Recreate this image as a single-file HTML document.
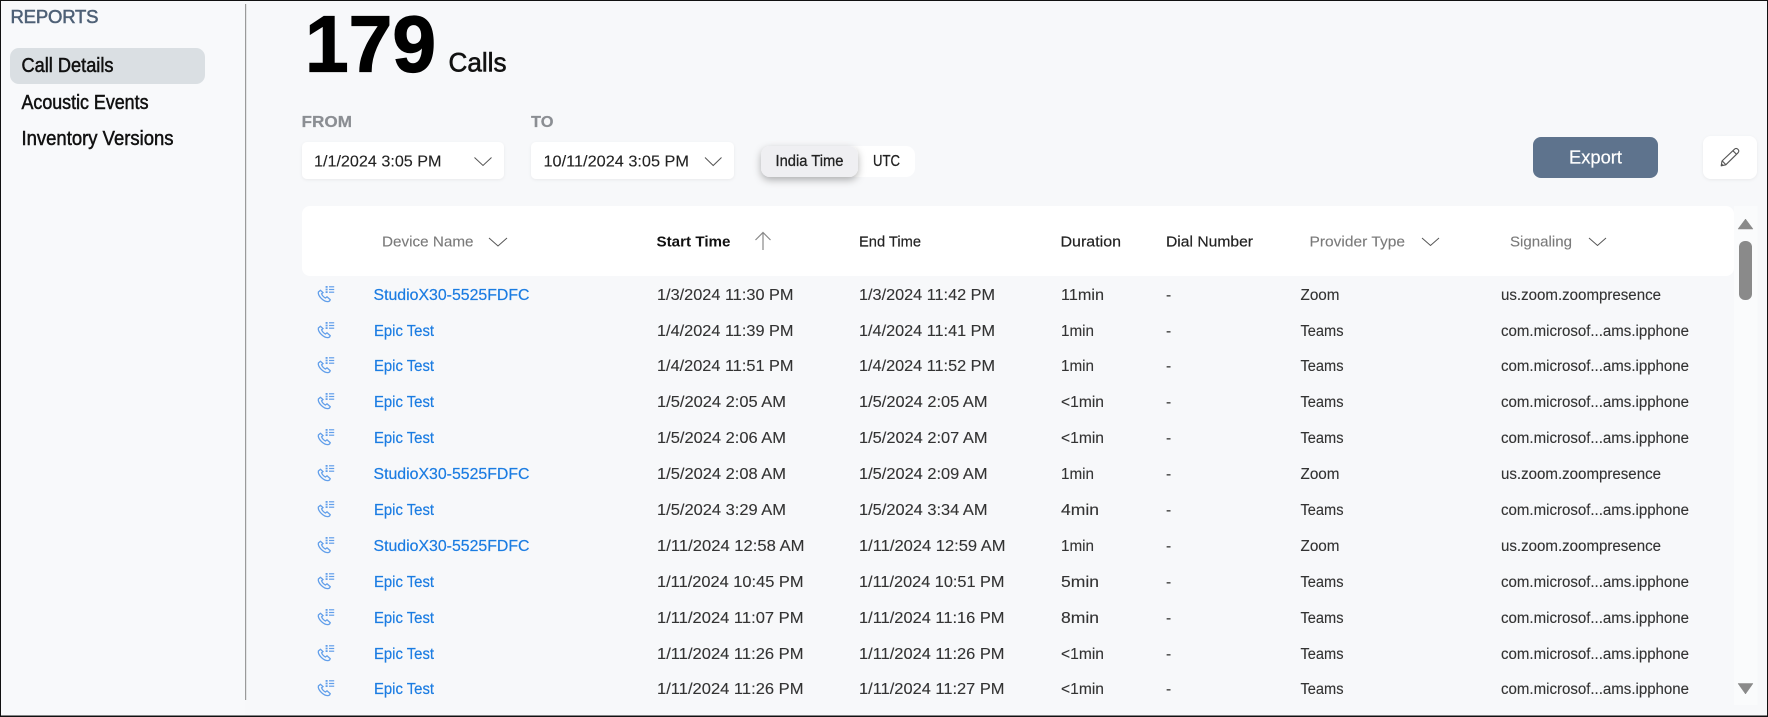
<!DOCTYPE html>
<html>
<head>
<meta charset="utf-8">
<style>
html,body{margin:0;padding:0;width:1768px;height:717px;overflow:hidden;background:#f7f8fa}
svg{display:block}
text{font-family:"Liberation Sans",sans-serif;font-size:15.5px;fill:#333;stroke:#333;stroke-width:.12px;white-space:pre}
.n{fill:#1b7ce2;stroke:#1b7ce2;stroke-width:.2px}
.h{fill:#222;stroke:#222;font-size:15px;stroke-width:.2px}
.g{fill:#7a7a7a;stroke:#7a7a7a;font-size:15px}
.m{font-size:20px;fill:#111;stroke:#111;stroke-width:.5px}
.l{font-size:16px;font-weight:bold;fill:#8b8e93;stroke:#8b8e93;stroke-width:.2px}
.c{fill:none;stroke:#555;stroke-width:1}
.i{fill:none;stroke:#629fea;stroke-width:1.3}
.b{fill:#629fea}
</style>
</head>
<body>
<svg width="1768" height="717" viewBox="0 0 1768 717" xmlns="http://www.w3.org/2000/svg">
<defs>
<filter id="s1" x="-10%" y="-20%" width="120%" height="150%"><feDropShadow dx="0" dy="1" stdDeviation="1.5" flood-color="#000" flood-opacity=".06"/></filter>
<filter id="s2" x="-30%" y="-40%" width="160%" height="220%"><feDropShadow dx="0" dy="3" stdDeviation="4" flood-color="#000" flood-opacity=".3"/></filter>
<g id="ic">
<path class="i" d="M3.5 4.3 L1.4 6 C0.6 9.5 6 15.6 10.6 15.6 C12 15.6 13 14.6 13.2 13.6 L10 10.8 L8.4 12 C6.6 11 5.2 9.4 4.6 7.8 L6 6.6 Z"/>
<rect class="b" x="8.6" y="0" width="2" height="1.8"/><rect class="b" x="8.6" y="2.6" width="2" height="1.8"/><rect class="b" x="8.6" y="5.2" width="2" height="1.8"/>
<rect class="b" x="12" y="0.2" width="5.2" height="1.2"/><rect class="b" x="12" y="2.9" width="5.2" height="1.2"/><rect class="b" x="12" y="5.6" width="5.2" height="1.2"/>
</g>
</defs>
<rect width="1768" height="717" fill="#f7f8fa"/>
<rect x="1" y="1" width="244" height="715" fill="#f8f9fb"/>

<!-- sidebar -->
<text x="10.5" y="23" style="font-size:18.5px;fill:#4e6076;stroke:#4e6076;stroke-width:.55px" textLength="88" lengthAdjust="spacing">REPORTS</text>
<rect x="10" y="48" width="195" height="36" rx="9" fill="#dadfe3"/>
<text class="m" x="21.5" y="72" textLength="92" lengthAdjust="spacingAndGlyphs">Call Details</text>
<text class="m" x="21.5" y="109" textLength="127" lengthAdjust="spacingAndGlyphs">Acoustic Events</text>
<text class="m" x="21.5" y="145" textLength="152" lengthAdjust="spacingAndGlyphs">Inventory Versions</text>
<rect x="245" y="4" width="1.2" height="696" fill="#9a9a9a"/>

<!-- title -->
<text x="305" y="71.5" style="font-size:80px;font-weight:bold;fill:#000;stroke:#000;stroke-width:1.2px" textLength="131" lengthAdjust="spacingAndGlyphs">179</text>
<text x="448.5" y="71.5" style="font-size:27px;fill:#111;stroke:#111;stroke-width:.6px" textLength="58" lengthAdjust="spacingAndGlyphs">Calls</text>

<!-- filters -->
<text class="l" x="301.5" y="127" textLength="50.5" lengthAdjust="spacingAndGlyphs">FROM</text>
<text class="l" x="531" y="127" textLength="22.5" lengthAdjust="spacingAndGlyphs">TO</text>
<rect x="302" y="142" width="202" height="37" rx="5" fill="#fff" filter="url(#s1)"/>
<text x="314" y="166.5" style="fill:#222;stroke:#222" textLength="127.5" lengthAdjust="spacingAndGlyphs">1/1/2024 3:05 PM</text>
<path class="c" d="M474.5 157.5 L483 165.5 L491.5 157.5"/>
<rect x="531" y="142" width="203" height="37" rx="5" fill="#fff" filter="url(#s1)"/>
<text x="543.5" y="166.5" style="fill:#222;stroke:#222" textLength="145.5" lengthAdjust="spacingAndGlyphs">10/11/2024 3:05 PM</text>
<path class="c" d="M705 157.5 L713.2 165.5 L721.5 157.5"/>

<!-- toggle -->
<rect x="800" y="146" width="115" height="31" rx="9" fill="#fff"/>
<rect x="761" y="146" width="97" height="31" rx="9" fill="#efeff2" filter="url(#s2)"/>
<text x="775.5" y="166" style="font-size:15.5px;fill:#222;stroke:#222;stroke-width:.3px" textLength="68" lengthAdjust="spacingAndGlyphs">India Time</text>
<text x="873" y="166" style="font-size:16px;fill:#222;stroke:#222;stroke-width:.3px" textLength="27" lengthAdjust="spacingAndGlyphs">UTC</text>

<!-- actions -->
<rect x="1533" y="137" width="125" height="41" rx="8" fill="#5e738d"/>
<text x="1569" y="163.5" style="font-size:18px;fill:#fff;stroke:#fff;stroke-width:.2px" textLength="53" lengthAdjust="spacingAndGlyphs">Export</text>
<rect x="1703" y="136" width="54" height="43" rx="8" fill="#fff" filter="url(#s1)"/>
<g fill="none" stroke="#555" stroke-width="1.1" stroke-linejoin="round">
<path d="M1722 161 L1734.5 149.2 C1735.6 148.2 1737 148.4 1738 149.4 C1739 150.5 1739 151.8 1738 152.8 L1725.8 164.8 L1721.2 165.8 Z"/>
<path d="M1733 150.8 L1736.6 154.4"/>
<path d="M1722.3 161 L1725.8 164.6"/>
</g>
<path d="M1721 166 L1721.6 163.2 L1723.8 165.4 Z" fill="#555"/>

<!-- scrollbar -->
<rect x="1734" y="206" width="23.5" height="499" fill="#fafbfc"/>
<path d="M1745.5 219 L1753 229 L1738 229 Z" fill="#8a8a8a" stroke="#8a8a8a" stroke-width=".5" stroke-linejoin="round"/>
<rect x="1739" y="241" width="13" height="59" rx="6" fill="#8a8a8a"/>
<path d="M1738 683.5 L1753 683.5 L1745.5 694 Z" fill="#8a8a8a" stroke="#8a8a8a" stroke-width=".5" stroke-linejoin="round"/>

<!-- table header -->
<rect x="302" y="206" width="1432" height="70" rx="8" fill="#fff"/>
<text class="g" x="382" y="246.5" textLength="91.5" lengthAdjust="spacingAndGlyphs">Device Name</text>
<path class="c" d="M489 238 L498 246 L507 238"/>
<text class="h" x="656.5" y="246.5" style="font-weight:bold;fill:#111;stroke:none" textLength="74" lengthAdjust="spacingAndGlyphs">Start Time</text>
<path d="M763 250 L763 232.5 M755.5 240 L763 232.5 L770.5 240" fill="none" stroke="#888" stroke-width="1.2"/>
<text class="h" x="859" y="246.5" textLength="62" lengthAdjust="spacingAndGlyphs">End Time</text>
<text class="h" x="1060.5" y="246.5" textLength="60.5" lengthAdjust="spacingAndGlyphs">Duration</text>
<text class="h" x="1166" y="246.5" textLength="87" lengthAdjust="spacingAndGlyphs">Dial Number</text>
<text class="g" x="1309.5" y="246.5" textLength="95.5" lengthAdjust="spacingAndGlyphs">Provider Type</text>
<path class="c" d="M1422 238 L1430.5 245.5 L1439 238"/>
<text class="g" x="1510" y="246.5" textLength="62" lengthAdjust="spacingAndGlyphs">Signaling</text>
<path class="c" d="M1589 238 L1597.5 245.5 L1606 238"/>

<!-- row 1 -->
<use href="#ic" x="317" y="286"/>
<text class="n" x="373.5" y="300" textLength="156" lengthAdjust="spacingAndGlyphs">StudioX30-5525FDFC</text>
<text x="657" y="300" textLength="136.5" lengthAdjust="spacingAndGlyphs">1/3/2024 11:30 PM</text>
<text x="859" y="300" textLength="136" lengthAdjust="spacingAndGlyphs">1/3/2024 11:42 PM</text>
<text x="1061" y="300" textLength="43" lengthAdjust="spacingAndGlyphs">11min</text>
<text x="1166" y="300">-</text>
<text x="1300.5" y="300" textLength="39" lengthAdjust="spacingAndGlyphs">Zoom</text>
<text x="1501" y="300" textLength="160" lengthAdjust="spacingAndGlyphs">us.zoom.zoompresence</text>
<!-- row 2 -->
<use href="#ic" x="317" y="322"/>
<text class="n" x="374" y="336" textLength="60" lengthAdjust="spacingAndGlyphs">Epic Test</text>
<text x="657" y="336" textLength="136.5" lengthAdjust="spacingAndGlyphs">1/4/2024 11:39 PM</text>
<text x="859" y="336" textLength="136" lengthAdjust="spacingAndGlyphs">1/4/2024 11:41 PM</text>
<text x="1061" y="336" textLength="33" lengthAdjust="spacingAndGlyphs">1min</text>
<text x="1166" y="336">-</text>
<text x="1300.5" y="336" textLength="43" lengthAdjust="spacingAndGlyphs">Teams</text>
<text x="1501" y="336" textLength="188" lengthAdjust="spacingAndGlyphs">com.microsof...ams.ipphone</text>
<!-- row 3 -->
<use href="#ic" x="317" y="357"/>
<text class="n" x="374" y="371" textLength="60" lengthAdjust="spacingAndGlyphs">Epic Test</text>
<text x="657" y="371" textLength="136.5" lengthAdjust="spacingAndGlyphs">1/4/2024 11:51 PM</text>
<text x="859" y="371" textLength="136" lengthAdjust="spacingAndGlyphs">1/4/2024 11:52 PM</text>
<text x="1061" y="371" textLength="33" lengthAdjust="spacingAndGlyphs">1min</text>
<text x="1166" y="371">-</text>
<text x="1300.5" y="371" textLength="43" lengthAdjust="spacingAndGlyphs">Teams</text>
<text x="1501" y="371" textLength="188" lengthAdjust="spacingAndGlyphs">com.microsof...ams.ipphone</text>
<!-- row 4 -->
<use href="#ic" x="317" y="393"/>
<text class="n" x="374" y="407" textLength="60" lengthAdjust="spacingAndGlyphs">Epic Test</text>
<text x="657" y="407" textLength="129" lengthAdjust="spacingAndGlyphs">1/5/2024 2:05 AM</text>
<text x="859" y="407" textLength="128.5" lengthAdjust="spacingAndGlyphs">1/5/2024 2:05 AM</text>
<text x="1061" y="407" textLength="43" lengthAdjust="spacingAndGlyphs">&lt;1min</text>
<text x="1166" y="407">-</text>
<text x="1300.5" y="407" textLength="43" lengthAdjust="spacingAndGlyphs">Teams</text>
<text x="1501" y="407" textLength="188" lengthAdjust="spacingAndGlyphs">com.microsof...ams.ipphone</text>
<!-- row 5 -->
<use href="#ic" x="317" y="429"/>
<text class="n" x="374" y="443" textLength="60" lengthAdjust="spacingAndGlyphs">Epic Test</text>
<text x="657" y="443" textLength="129" lengthAdjust="spacingAndGlyphs">1/5/2024 2:06 AM</text>
<text x="859" y="443" textLength="128.5" lengthAdjust="spacingAndGlyphs">1/5/2024 2:07 AM</text>
<text x="1061" y="443" textLength="43" lengthAdjust="spacingAndGlyphs">&lt;1min</text>
<text x="1166" y="443">-</text>
<text x="1300.5" y="443" textLength="43" lengthAdjust="spacingAndGlyphs">Teams</text>
<text x="1501" y="443" textLength="188" lengthAdjust="spacingAndGlyphs">com.microsof...ams.ipphone</text>
<!-- row 6 -->
<use href="#ic" x="317" y="465"/>
<text class="n" x="373.5" y="479" textLength="156" lengthAdjust="spacingAndGlyphs">StudioX30-5525FDFC</text>
<text x="657" y="479" textLength="129" lengthAdjust="spacingAndGlyphs">1/5/2024 2:08 AM</text>
<text x="859" y="479" textLength="128.5" lengthAdjust="spacingAndGlyphs">1/5/2024 2:09 AM</text>
<text x="1061" y="479" textLength="33" lengthAdjust="spacingAndGlyphs">1min</text>
<text x="1166" y="479">-</text>
<text x="1300.5" y="479" textLength="39" lengthAdjust="spacingAndGlyphs">Zoom</text>
<text x="1501" y="479" textLength="160" lengthAdjust="spacingAndGlyphs">us.zoom.zoompresence</text>
<!-- row 7 -->
<use href="#ic" x="317" y="501"/>
<text class="n" x="374" y="515" textLength="60" lengthAdjust="spacingAndGlyphs">Epic Test</text>
<text x="657" y="515" textLength="129" lengthAdjust="spacingAndGlyphs">1/5/2024 3:29 AM</text>
<text x="859" y="515" textLength="128.5" lengthAdjust="spacingAndGlyphs">1/5/2024 3:34 AM</text>
<text x="1061" y="515" textLength="38" lengthAdjust="spacingAndGlyphs">4min</text>
<text x="1166" y="515">-</text>
<text x="1300.5" y="515" textLength="43" lengthAdjust="spacingAndGlyphs">Teams</text>
<text x="1501" y="515" textLength="188" lengthAdjust="spacingAndGlyphs">com.microsof...ams.ipphone</text>
<!-- row 8 -->
<use href="#ic" x="317" y="537"/>
<text class="n" x="373.5" y="551" textLength="156" lengthAdjust="spacingAndGlyphs">StudioX30-5525FDFC</text>
<text x="657" y="551" textLength="147.5" lengthAdjust="spacingAndGlyphs">1/11/2024 12:58 AM</text>
<text x="859" y="551" textLength="146.5" lengthAdjust="spacingAndGlyphs">1/11/2024 12:59 AM</text>
<text x="1061" y="551" textLength="33" lengthAdjust="spacingAndGlyphs">1min</text>
<text x="1166" y="551">-</text>
<text x="1300.5" y="551" textLength="39" lengthAdjust="spacingAndGlyphs">Zoom</text>
<text x="1501" y="551" textLength="160" lengthAdjust="spacingAndGlyphs">us.zoom.zoompresence</text>
<!-- row 9 -->
<use href="#ic" x="317" y="573"/>
<text class="n" x="374" y="587" textLength="60" lengthAdjust="spacingAndGlyphs">Epic Test</text>
<text x="657" y="587" textLength="146.5" lengthAdjust="spacingAndGlyphs">1/11/2024 10:45 PM</text>
<text x="859" y="587" textLength="145.5" lengthAdjust="spacingAndGlyphs">1/11/2024 10:51 PM</text>
<text x="1061" y="587" textLength="38" lengthAdjust="spacingAndGlyphs">5min</text>
<text x="1166" y="587">-</text>
<text x="1300.5" y="587" textLength="43" lengthAdjust="spacingAndGlyphs">Teams</text>
<text x="1501" y="587" textLength="188" lengthAdjust="spacingAndGlyphs">com.microsof...ams.ipphone</text>
<!-- row 10 -->
<use href="#ic" x="317" y="609"/>
<text class="n" x="374" y="623" textLength="60" lengthAdjust="spacingAndGlyphs">Epic Test</text>
<text x="657" y="623" textLength="146.5" lengthAdjust="spacingAndGlyphs">1/11/2024 11:07 PM</text>
<text x="859" y="623" textLength="145.5" lengthAdjust="spacingAndGlyphs">1/11/2024 11:16 PM</text>
<text x="1061" y="623" textLength="38" lengthAdjust="spacingAndGlyphs">8min</text>
<text x="1166" y="623">-</text>
<text x="1300.5" y="623" textLength="43" lengthAdjust="spacingAndGlyphs">Teams</text>
<text x="1501" y="623" textLength="188" lengthAdjust="spacingAndGlyphs">com.microsof...ams.ipphone</text>
<!-- row 11 -->
<use href="#ic" x="317" y="645"/>
<text class="n" x="374" y="659" textLength="60" lengthAdjust="spacingAndGlyphs">Epic Test</text>
<text x="657" y="659" textLength="146.5" lengthAdjust="spacingAndGlyphs">1/11/2024 11:26 PM</text>
<text x="859" y="659" textLength="145.5" lengthAdjust="spacingAndGlyphs">1/11/2024 11:26 PM</text>
<text x="1061" y="659" textLength="43" lengthAdjust="spacingAndGlyphs">&lt;1min</text>
<text x="1166" y="659">-</text>
<text x="1300.5" y="659" textLength="43" lengthAdjust="spacingAndGlyphs">Teams</text>
<text x="1501" y="659" textLength="188" lengthAdjust="spacingAndGlyphs">com.microsof...ams.ipphone</text>
<!-- row 12 -->
<use href="#ic" x="317" y="680"/>
<text class="n" x="374" y="694" textLength="60" lengthAdjust="spacingAndGlyphs">Epic Test</text>
<text x="657" y="694" textLength="146.5" lengthAdjust="spacingAndGlyphs">1/11/2024 11:26 PM</text>
<text x="859" y="694" textLength="145.5" lengthAdjust="spacingAndGlyphs">1/11/2024 11:27 PM</text>
<text x="1061" y="694" textLength="43" lengthAdjust="spacingAndGlyphs">&lt;1min</text>
<text x="1166" y="694">-</text>
<text x="1300.5" y="694" textLength="43" lengthAdjust="spacingAndGlyphs">Teams</text>
<text x="1501" y="694" textLength="188" lengthAdjust="spacingAndGlyphs">com.microsof...ams.ipphone</text>

<!-- outer border -->
<rect x="0" y="0" width="1768" height="1" fill="#111"/>
<rect x="0" y="0" width="1" height="717" fill="#111"/>
<rect x="1767" y="0" width="1" height="717" fill="#111"/>
<rect x="0" y="715.5" width="1768" height="1.5" fill="#111"/>
</svg>
</body>
</html>
